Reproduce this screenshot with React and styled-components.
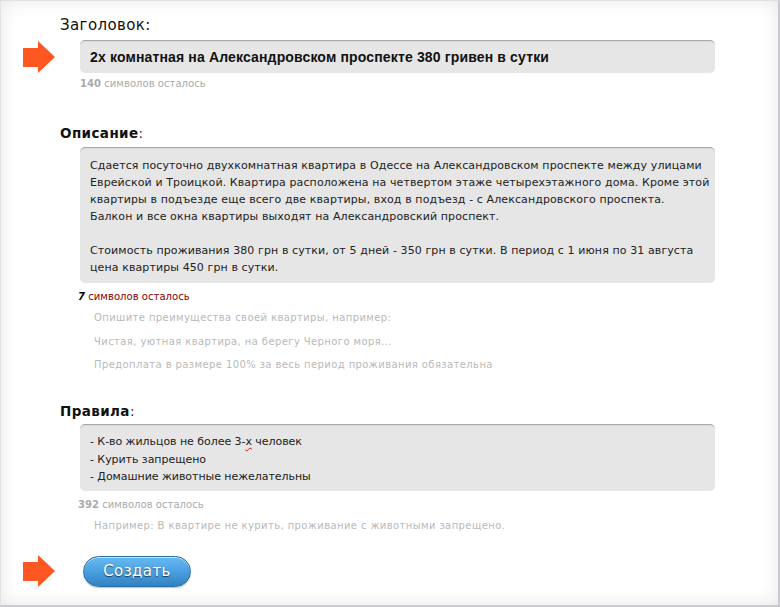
import React from "react";
import styled, { createGlobalStyle } from "styled-components";

const GlobalStyle = createGlobalStyle`
  html, body { margin: 0; padding: 0; background: #fff; }
  body { font-family: "DejaVu Sans", Verdana, sans-serif; }
`;

const Frame = styled.div`
  box-sizing: border-box;
  width: 780px;
  height: 607px;
  background: #fff;
  border-top: 1px solid #e2e2e2;
  border-left: 1px solid #e2e2e2;
  border-right: 2px solid #c9c9d1;
  border-bottom: 2px solid #c9c9d1;
  box-shadow: inset 0 0 18px rgba(0, 0, 0, 0.1);
  overflow: hidden;
  padding-top: 15px;
`;

const Label = styled.div`
  margin: ${(p) => p.$top || 0}px 0 0 59px;
  height: 18px;
  line-height: 18px;
  font-size: ${(p) => (p.$bold ? 13.5 : 15)}px;
  letter-spacing: 0.4px;
  color: #111;
  font-weight: ${(p) => (p.$bold ? "bold" : "normal")};
  span { font-weight: normal; color: #333; }
`;

const FieldRow = styled.div`
  display: grid;
  grid-template-columns: 79px 635px;
  align-items: center;
  margin-top: ${(p) => p.$top || 0}px;
`;

const ArrowCell = styled.div`
  display: flex;
  padding-left: 22px;
`;

const Box = styled.div`
  box-sizing: border-box;
  background: #e6e6e6;
  border-radius: 5px;
  border-top: 1px solid #a9a9a9;
  box-shadow: inset 0 1px 1px rgba(0, 0, 0, 0.06);
  height: ${(p) => p.$h}px;
  padding: ${(p) => p.$pad || "0 10px"};
`;

const TitleText = styled.div`
  font-family: "Liberation Sans", Arial, sans-serif;
  font-weight: bold;
  font-size: 14px;
  letter-spacing: 0.15px;
  line-height: 32px;
  color: #111;
  white-space: nowrap;
`;

const BodyText = styled.div`
  font-size: 11px;
  line-height: ${(p) => p.$lh || 17}px;
  letter-spacing: ${(p) => p.$ls ?? 0.1}px;
  color: #222;
  white-space: pre;
`;

const Counter = styled.div`
  margin: ${(p) => p.$top || 0}px 0 0 ${(p) => p.$left || 79}px;
  height: 12px;
  line-height: 12px;
  font-size: 10px;
  letter-spacing: 0.05px;
  color: ${(p) => (p.$alert ? "#8a0000" : "#aaa")};
  b {
    color: ${(p) => (p.$alert ? "#000" : "#aaa")};
    font-style: ${(p) => (p.$alert ? "italic" : "normal")};
  }
`;

const Hint = styled.div`
  margin: ${(p) => p.$top || 0}px 0 0 93px;
  height: 12px;
  line-height: 12px;
  font-size: 10px;
  letter-spacing: 0.4px;
  color: #b9b9b9;
`;

const Spell = styled.span`
  text-decoration: underline wavy #e00;
  text-decoration-thickness: 1px;
  text-underline-offset: 2px;
`;

const CreateButton = styled.button`
  box-sizing: border-box;
  margin-left: 3px;
  width: 108px;
  height: 31px;
  border-radius: 16px;
  border: 1px solid #2a6ea6;
  background: linear-gradient(to bottom, #68baf0 0%, #4ca2e2 45%, #3182c4 100%);
  box-shadow: inset 0 1px 0 rgba(255, 255, 255, 0.6), 0 1px 1px rgba(0, 0, 0, 0.25);
  color: #fff;
  font-family: "DejaVu Sans", Verdana, sans-serif;
  font-size: 15px;
  letter-spacing: 0.4px;
  text-shadow: 0 1px 1px rgba(0, 0, 0, 0.6);
  padding: 0;
  cursor: pointer;
`;

const Arrow = () => (
  <svg width="33" height="32" viewBox="0 0 33 32">
    <polygon points="0,7 15,7 15,0 32,16 15,32 15,26 0,26" fill="#ff5722" />
  </svg>
);

const description = `Сдается посуточно двухкомнатная квартира в Одессе на Александровском проспекте между улицами
Еврейской и Троицкой. Квартира расположена на четвертом этаже четырехэтажного дома. Кроме этой
квартиры в подъезде еще всего две квартиры, вход в подъезд - с Александровского проспекта.
Балкон и все окна квартиры выходят на Александровский проспект.

Стоимость проживания 380 грн в сутки, от 5 дней - 350 грн в сутки. В период с 1 июня по 31 августа
цена квартиры 450 грн в сутки.`;

export default function App() {
  return (
    <>
      <GlobalStyle />
      <Frame>
        <Label>Заголовок:</Label>
        <FieldRow $top={6}>
          <ArrowCell><Arrow /></ArrowCell>
          <Box $h={33}>
            <TitleText>2х комнатная на Александровском проспекте 380 гривен в сутки</TitleText>
          </Box>
        </FieldRow>
        <Counter $top={5}><b>140</b> символов осталось</Counter>

        <Label $bold $top={34}>Описание<span>:</span></Label>
        <FieldRow $top={5}>
          <div />
          <Box $h={136} $pad="9px 10px 0">
            <BodyText>{description}</BodyText>
          </Box>
        </FieldRow>
        <Counter $alert $left={77} $top={8}><b>7</b> символов осталось</Counter>
        <Hint $top={9}>Опишите преимущества своей квартиры, например:</Hint>
        <Hint $top={12}>Чистая, уютная квартира, на берегу Черного моря...</Hint>
        <Hint $top={11}>Предоплата в размере 100% за весь период проживания обязательна</Hint>

        <Label $bold $top={31}>Правила<span>:</span></Label>
        <FieldRow $top={4}>
          <div />
          <Box $h={67} $pad="8px 10px 0">
            <BodyText $ls={-0.05} $lh={17.5}>
              - К-во жильцов не более 3-<Spell>х</Spell> человек{"\n"}- Курить запрещено{"\n"}- Домашние животные нежелательны
            </BodyText>
          </Box>
        </FieldRow>
        <Counter $left={77} $top={8}><b>392</b> символов осталось</Counter>
        <Hint $top={9}>Например: В квартире не курить, проживание с животными запрещено.</Hint>

        <FieldRow $top={23}>
          <ArrowCell><Arrow /></ArrowCell>
          <div><CreateButton>Создать</CreateButton></div>
        </FieldRow>
      </Frame>
    </>
  );
}
